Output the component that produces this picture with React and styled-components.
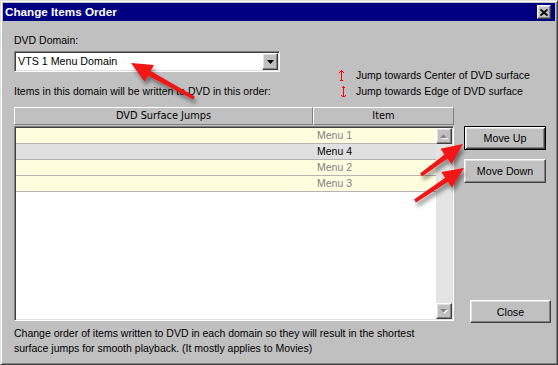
import styled, { createGlobalStyle } from 'styled-components';

const GlobalStyle = createGlobalStyle`
  html, body {
    margin: 0;
    padding: 0;
    background: #c0c0c0;
  }
  body {
    font-family: 'Liberation Sans', Arial, sans-serif;
    font-size: 10.5px;
    color: #000;
  }
  * {
    box-sizing: border-box;
  }
`;

const ROWS = [
  { id: 1, name: 'Menu 1', selected: false },
  { id: 4, name: 'Menu 4', selected: true },
  { id: 2, name: 'Menu 2', selected: false },
  { id: 3, name: 'Menu 3', selected: false },
];

// callout arrows drawn over the dialog (tail -> tip)
const CALLOUTS = [
  { from: [194, 98], to: [131, 63] },
  { from: [421, 175], to: [463, 144] },
  { from: [415, 201], to: [464, 168] },
];

const arrowPoints = ({ from, to }) => {
  const [x1, y1] = from;
  const [x2, y2] = to;
  const len = Math.hypot(x2 - x1, y2 - y1);
  const ux = (x2 - x1) / len;
  const uy = (y2 - y1) / len;
  const nx = -uy;
  const ny = ux;
  const shaft = 5;
  const headLen = 21;
  const headW = 19;
  const bx = x2 - ux * headLen;
  const by = y2 - uy * headLen;
  const pts = [
    [x1 + nx * shaft * 0.35, y1 + ny * shaft * 0.35],
    [bx + nx * shaft / 2, by + ny * shaft / 2],
    [bx + nx * headW / 2, by + ny * headW / 2],
    [x2, y2],
    [bx - nx * headW / 2, by - ny * headW / 2],
    [bx - nx * shaft / 2, by - ny * shaft / 2],
    [x1 - nx * shaft * 0.35, y1 - ny * shaft * 0.35],
  ];
  return pts.map(p => p.map(v => v.toFixed(1)).join(',')).join(' ');
};

const App = () => {
  return (
    <>
      <GlobalStyle />
      <Window>
        <TitleBar>
          <Title>Change Items Order</Title>
          <TitleClose>
            <svg width="8" height="7" viewBox="0 0 8 7">
              <path d="M0.5 0.5 L7.5 6.5 M7.5 0.5 L0.5 6.5" stroke="#000" strokeWidth="1.8" />
            </svg>
          </TitleClose>
        </TitleBar>
        <Body>
          <TopRow>
            <DomainBlock>
              <Label>DVD Domain:</Label>
              <Combo>
                <ComboText>VTS 1 Menu Domain</ComboText>
                <ComboButton>
                  <svg width="7" height="4" viewBox="0 0 7 4">
                    <path d="M0 0 H7 L3.5 4 Z" fill="#000" />
                  </svg>
                </ComboButton>
              </Combo>
              <Label $gap={13}>Items in this domain will be written to DVD in this order:</Label>
            </DomainBlock>
            <Legend>
              <LegendRow>
                <LegendIcon>
                  <svg width="7" height="11" viewBox="0 0 7 11" shapeRendering="crispEdges">
                    <path d="M3 0 V11 M2 1 H5 M1 2 H2 M5 2 H6 M2 10 H5" stroke="#ff0000" strokeWidth="1" fill="none" />
                  </svg>
                </LegendIcon>
                Jump towards Center of DVD surface
              </LegendRow>
              <LegendRow>
                <LegendIcon $shift={2}>
                  <svg width="7" height="11" viewBox="0 0 7 11" shapeRendering="crispEdges">
                    <path d="M3 0 V11 M2 10 H5 M1 9 H2 M5 9 H6 M2 1 H5" stroke="#ff0000" strokeWidth="1" fill="none" />
                  </svg>
                </LegendIcon>
                Jump towards Edge of DVD surface
              </LegendRow>
            </Legend>
          </TopRow>

          <MainRow>
            <ListColumn>
              <Header>
                <HeadCell $width={299}>DVD Surface Jumps</HeadCell>
                <HeadCell $width={141}>Item</HeadCell>
              </Header>
              <ListBox>
                <Rows>
                  {ROWS.map(row => (
                    <Row key={row.id} $selected={row.selected}>
                      <span />
                      <ItemCell>{row.name}</ItemCell>
                    </Row>
                  ))}
                </Rows>
                <ScrollBar>
                  <ScrollButton>
                    <svg width="8" height="5" viewBox="0 0 8 5">
                      <path d="M1 5 H8 L4.5 1.5 Z" fill="#fff" />
                      <path d="M0 4 H7 L3.5 0.5 Z" fill="#808080" />
                    </svg>
                  </ScrollButton>
                  <ScrollButton>
                    <svg width="8" height="5" viewBox="0 0 8 5">
                      <path d="M1 1 H8 L4.5 4.5 Z" fill="#fff" />
                      <path d="M0 0 H7 L3.5 3.5 Z" fill="#808080" />
                    </svg>
                  </ScrollButton>
                </ScrollBar>
              </ListBox>
            </ListColumn>

            <ButtonColumn>
              <Button $default>Move Up</Button>
              <Button>Move Down</Button>
              <CloseButton>Close</CloseButton>
            </ButtonColumn>
          </MainRow>

          <Footer>
            Change order of items written to DVD in each domain so they will result in the shortest
            <br />
            surface jumps for smooth playback. (It mostly applies to Movies)
          </Footer>
        </Body>

        <Callouts width="558" height="365" viewBox="0 0 558 365">
          <defs>
            <filter id="callout-shadow" x="-30%" y="-30%" width="160%" height="160%">
              <feDropShadow dx="2" dy="4" stdDeviation="2" floodColor="#000" floodOpacity="0.45" />
            </filter>
          </defs>
          {CALLOUTS.map((c, i) => (
            <polygon key={i} points={arrowPoints(c)} fill="#f21212" filter="url(#callout-shadow)" />
          ))}
        </Callouts>
      </Window>
    </>
  );
};

export default App;

const raised = `
  border: 1px solid;
  border-color: #fff #404040 #404040 #fff;
  box-shadow: inset -1px -1px 0 #808080, inset 1px 1px 0 #dfdfdf;
`;

const sunken = `
  border: 1px solid;
  border-color: #808080 #fff #fff #808080;
  box-shadow: inset 1px 1px 0 #404040, inset -1px -1px 0 #dfdfdf;
`;

const Window = styled.div`
  position: relative;
  width: 558px;
  height: 365px;
  display: flex;
  flex-direction: column;
  padding: 2px;
  background: #c0c0c0;
  border: 1px solid;
  border-color: #dfdfdf #404040 #404040 #dfdfdf;
  box-shadow: inset 1px 1px 0 #fff, inset -1px -1px 0 #808080;
  overflow: hidden;
`;

const TitleBar = styled.div`
  height: 18px;
  display: flex;
  align-items: center;
  justify-content: space-between;
  padding: 0 4px 0 2px;
  background: #000080;
`;

const Title = styled.div`
  color: #fff;
  font-weight: 700;
  font-size: 11.7px;
  line-height: 18px;
`;

const TitleClose = styled.div`
  width: 14px;
  height: 14px;
  display: flex;
  align-items: center;
  justify-content: center;
  background: #c0c0c0;
  ${raised}
`;

const Body = styled.div`
  display: flex;
  flex-direction: column;
  padding: 13px 0 0 11px;
`;

const TopRow = styled.div`
  display: flex;
  align-items: flex-end;
  gap: 58px;
`;

const DomainBlock = styled.div`
  width: 266px;
  display: flex;
  flex-direction: column;
`;

const Label = styled.div`
  line-height: 13px;
  white-space: nowrap;
  margin-top: ${props => (props.$gap ? `${props.$gap}px` : '0')};
`;

const Combo = styled.div`
  margin-top: 4px;
  height: 21px;
  display: flex;
  align-items: stretch;
  background: #fff;
  ${sunken}
  padding: 1px;
`;

const ComboText = styled.div`
  flex: 1;
  padding-left: 2px;
  font-size: 10.7px;
  line-height: 17px;
`;

const ComboButton = styled.div`
  width: 16px;
  display: flex;
  align-items: center;
  justify-content: center;
  background: #c0c0c0;
  ${raised}
`;

const Legend = styled.div`
  display: flex;
  flex-direction: column;
  margin-bottom: -1px;
`;

const LegendRow = styled.div`
  display: flex;
  align-items: center;
  height: 16px;
  line-height: 16px;
  white-space: nowrap;
`;

const LegendIcon = styled.span`
  width: 18px;
  display: flex;
  padding-left: ${props => props.$shift || 0}px;
`;

const MainRow = styled.div`
  margin-top: 9px;
  display: flex;
  gap: 10px;
`;

const ListColumn = styled.div`
  width: 440px;
  display: flex;
  flex-direction: column;
`;

const Header = styled.div`
  display: flex;
  height: 18px;
`;

const HeadCell = styled.div`
  width: ${props => props.$width}px;
  border: 1px solid;
  border-color: #fff #808080 #808080 #fff;
  font-family: 'DejaVu Sans', Verdana, sans-serif;
  font-size: 9.8px;
  line-height: 15px;
  text-align: center;
`;

const ListBox = styled.div`
  margin-top: 1px;
  height: 195px;
  display: flex;
  background: #fff;
  ${sunken}
  padding: 1px;
`;

const Rows = styled.div`
  flex: 1;
  display: flex;
  flex-direction: column;
`;

const Row = styled.div`
  display: grid;
  grid-template-columns: 297px 1fr;
  height: 16px;
  border-bottom: 1px solid #b4b4b4;
  background: ${props => (props.$selected ? '#e0e0e0' : '#ffffe0')};
  color: ${props => (props.$selected ? '#000' : '#808080')};
`;

const ItemCell = styled.span`
  padding-left: 4px;
  line-height: 15px;
`;

const ScrollBar = styled.div`
  width: 16px;
  display: flex;
  flex-direction: column;
  justify-content: space-between;
  background: #e4e4e4;
`;

const ScrollButton = styled.div`
  width: 16px;
  height: 16px;
  display: flex;
  align-items: center;
  justify-content: center;
  background: #c0c0c0;
  ${raised}
`;

const ButtonColumn = styled.div`
  display: flex;
  flex-direction: column;
  gap: 9px;
  padding-top: 19px;
  margin-bottom: -2px;
`;

const Button = styled.div`
  width: 82px;
  height: 24px;
  display: flex;
  align-items: center;
  justify-content: center;
  background: #c0c0c0;
  font-size: 10.7px;
  ${props =>
    props.$default
      ? `
    border: 1px solid #000;
    box-shadow: inset 1px 1px 0 #fff, inset -1px -1px 0 #404040, inset 2px 2px 0 #dfdfdf, inset -2px -2px 0 #808080;
  `
      : raised}
`;

const CloseButton = styled(Button)`
  width: 81px;
  height: 23px;
  margin-top: auto;
  margin-left: 6px;
`;

const Footer = styled.div`
  margin-top: 5px;
  line-height: 15px;
  white-space: nowrap;
`;

const Callouts = styled.svg`
  position: absolute;
  top: -1px;
  left: -1px;
  pointer-events: none;
`;
